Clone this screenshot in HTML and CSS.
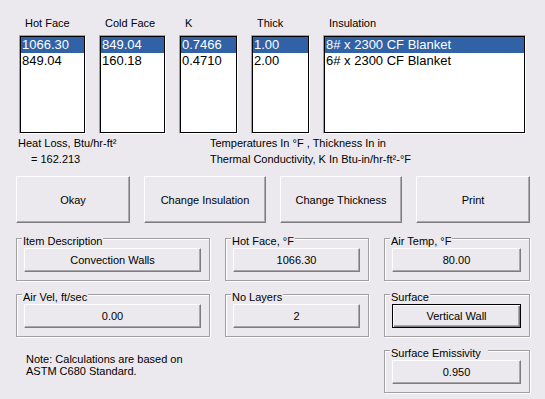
FILE: index.html
```html
<!DOCTYPE html>
<html lang="en">
  <head>
    <meta charset="UTF-8" />
    <meta name="viewport" content="width=device-width, initial-scale=1.0" />
    <title>Heat Loss</title>
    <link rel="stylesheet" href="styles.css">
  </head>
  <body>
    <div class="window">
      <div class="lists">
        <div class="col">
          <div class="col-title">Hot Face</div>
          <div class="list">
            <div class="row selected">1066.30</div>
            <div class="row">849.04</div>
          </div>
        </div>
        <div class="col">
          <div class="col-title">Cold Face</div>
          <div class="list">
            <div class="row selected">849.04</div>
            <div class="row">160.18</div>
          </div>
        </div>
        <div class="col">
          <div class="col-title">K</div>
          <div class="list">
            <div class="row selected">0.7466</div>
            <div class="row">0.4710</div>
          </div>
        </div>
        <div class="col">
          <div class="col-title">Thick</div>
          <div class="list">
            <div class="row selected">1.00</div>
            <div class="row">2.00</div>
          </div>
        </div>
        <div class="col">
          <div class="col-title">Insulation</div>
          <div class="list">
            <div class="row selected">8# x 2300 CF Blanket</div>
            <div class="row">6# x 2300 CF Blanket</div>
          </div>
        </div>
      </div>

      <div class="info">
        <div class="loss">
          <div>Heat Loss, Btu/hr-ft²</div>
          <div class="loss-value">= 162.213</div>
        </div>
        <div class="units">
          <div>Temperatures In °F , Thickness In in</div>
          <div>Thermal Conductivity, K In Btu-in/hr-ft²-°F</div>
        </div>
      </div>

      <div class="actions">
        <button class="btn action">Okay</button>
        <button class="btn action">Change Insulation</button>
        <button class="btn action">Change Thickness</button>
        <button class="btn action">Print</button>
      </div>

      <div class="fields">
        <div class="group">
          <span class="group-label">Item Description</span>
          <button class="btn field">Convection Walls</button>
        </div>
        <div class="group">
          <span class="group-label">Hot Face, °F</span>
          <button class="btn field">1066.30</button>
        </div>
        <div class="group">
          <span class="group-label">Air Temp, °F</span>
          <button class="btn field">80.00</button>
        </div>

        <div class="group">
          <span class="group-label">Air Vel, ft/sec</span>
          <button class="btn field">0.00</button>
        </div>
        <div class="group">
          <span class="group-label">No Layers</span>
          <button class="btn field">2</button>
        </div>
        <div class="group">
          <span class="group-label">Surface</span>
          <button class="btn field default">Vertical Wall</button>
        </div>

        <div class="note">
          Note: Calculations are based on<br>
          ASTM C680 Standard.
        </div>
        <div class="group">
          <span class="group-label wide">Surface Emissivity</span>
          <button class="btn field">0.950</button>
        </div>
      </div>
    </div>
  </body>
</html>
```

FILE: styles.css
```css
* {
  box-sizing: border-box;
}
body {
  margin: 0;
  background-color: #ebe9ed;
  font-family: "Liberation Sans", Arial, sans-serif;
  font-size: 11px;
  color: #000;
}
.window {
  width: 545px;
  height: 399px;
  padding: 17px 0 0 16px;
  overflow: hidden;
}
.lists {
  display: grid;
  grid-template-columns: 67px 67px 59px 59px 203px;
  column-gap: 13px;
  margin-left: 3px;
}
.col-title {
  line-height: 13px;
  padding-left: 6px;
  margin-bottom: 5px;
}
.list {
  height: 99px;
  background-color: white;
  border: 1px solid;
  border-color: #a0a0a0 #fff #fff #a0a0a0;
  box-shadow: inset 0 0 0 1px #000;
  padding: 1px;
}
.row {
  font-size: 13px;
  line-height: 16px;
  height: 16px;
  padding-left: 1px;
  white-space: nowrap;
}
.row.selected {
  background-color: #3162a6;
  color: white;
}
.info {
  display: flex;
  margin: 1px 0 0 2px;
  line-height: 16px;
}
.loss {
  width: 192px;
}
.loss-value {
  padding-left: 13px;
}
.actions {
  display: grid;
  grid-template-columns: 114px 122px 122px 114px;
  column-gap: 14px;
  margin-top: 9px;
}
.btn {
  font-family: inherit;
  font-size: 11px;
  color: #000;
  background-color: #ebe9ed;
  border: 1px solid;
  border-color: #fff #7d7d80 #7d7d80 #fff;
  box-shadow: inset -1px -1px 0 #aaa8ad;
  padding: 0;
  margin: 0;
  cursor: pointer;
}
.action {
  height: 47px;
}
.fields {
  display: grid;
  grid-template-columns: 194px 144px 146px;
  column-gap: 15px;
  row-gap: 13px;
  margin-top: 15px;
}
.group {
  position: relative;
  height: 43px;
  border: 1px solid #a0a0a0;
  box-shadow: 1px 1px 0 #fff, inset 1px 1px 0 #fff;
  padding: 9px 8px 8px 7px;
}
.group-label {
  position: absolute;
  top: -4px;
  left: 5px;
  line-height: 13px;
  padding: 0 1px;
  background-color: #ebe9ed;
}
.group-label.wide {
  padding-right: 7px;
}
.field {
  display: block;
  width: 100%;
  height: 24px;
}
.field.default {
  border-color: #000;
  box-shadow: inset 1px 1px 0 #fff, inset -1px -1px 0 #7d7d80, inset -2px -2px 0 #aaa8ad;
}
.note {
  grid-column: 1 / 3;
  padding: 3px 0 0 10px;
  line-height: 12px;
}
```
